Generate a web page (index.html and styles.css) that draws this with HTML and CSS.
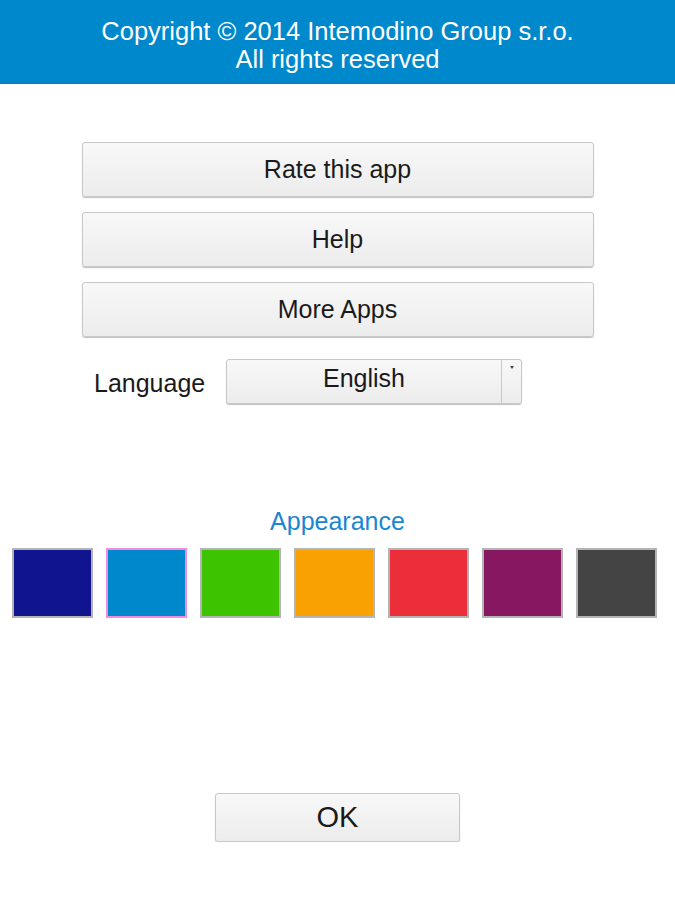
FILE: index.html
```html
<!DOCTYPE html>
<html lang="en">
<head>
  <meta charset="UTF-8">
  <title>Settings</title>
  <link rel="stylesheet" href="styles.css">
</head>
<body>
  <div class="header">
    <div>Copyright &copy; 2014 Intemodino Group s.r.o.</div>
    <div>All rights reserved</div>
  </div>

  <div class="menu">
    <button class="btn">Rate this app</button>
    <button class="btn">Help</button>
    <button class="btn">More Apps</button>
  </div>

  <div class="lang-row">
    <span class="lang-label">Language</span>
    <div class="select">
      <span class="select-value">English</span>
      <span class="select-arrow"></span>
    </div>
  </div>

  <div class="appearance">Appearance</div>
  <div class="swatches">
    <div class="swatch" style="background:#10148f"></div>
    <div class="swatch selected" style="background:#0088cc"></div>
    <div class="swatch" style="background:#3ec300"></div>
    <div class="swatch" style="background:#f9a100"></div>
    <div class="swatch" style="background:#ec2d3a"></div>
    <div class="swatch" style="background:#861760"></div>
    <div class="swatch" style="background:#444444"></div>
  </div>

  <div class="footer">
    <button class="btn ok">OK</button>
  </div>
</body>
</html>
```

FILE: styles.css
```css
html, body {
  margin: 0;
  padding: 0;
  background: #fff;
  font-family: "Liberation Sans", Arial, sans-serif;
  color: #1a1a1a;
}

.header {
  height: 84px;
  box-sizing: border-box;
  padding-top: 17px;
  background: #0088cc;
  border-bottom: 2px solid #0680c2;
  color: #fff;
  text-align: center;
  font-size: 25.5px;
  line-height: 28px;
}

.menu {
  display: flex;
  flex-direction: column;
  gap: 15px;
  width: 512px;
  margin: 58px auto 0;
}

.btn {
  height: 55px;
  border: 1px solid #c8c8c8;
  border-radius: 3px;
  background: linear-gradient(#f8f8f8, #ececec);
  box-shadow: 0 1px 1px rgba(0,0,0,0.25);
  font-family: "Liberation Sans", Arial, sans-serif;
  font-size: 25px;
  color: #1a1a1a;
  padding: 0;
}

.lang-row {
  display: flex;
  align-items: center;
  margin: 22px 0 0 94px;
}

.lang-label {
  font-size: 25px;
  width: 132px;
  margin-top: 4px;
}

.select {
  display: flex;
  width: 296px;
  height: 45px;
  box-sizing: border-box;
  border: 1px solid #c8c8c8;
  border-radius: 3px;
  background: linear-gradient(#f8f8f8, #ececec);
  box-shadow: 0 1px 1px rgba(0,0,0,0.25);
}

.select-value {
  flex: 1;
  text-align: center;
  font-size: 25px;
  line-height: 36px;
}

.select-arrow {
  position: relative;
  width: 19px;
  border-left: 1px solid #c8c8c8;
}

.select-arrow::after {
  content: "";
  position: absolute;
  top: 6px;
  left: 8px;
  border-left: 2px solid transparent;
  border-right: 2px solid transparent;
  border-top: 3px solid #444;
}

.appearance {
  margin-top: 103px;
  text-align: center;
  color: #1a86d0;
  font-size: 25px;
}

.swatches {
  display: flex;
  gap: 13px;
  padding: 12px 0 0 12px;
}

.swatch {
  width: 81px;
  height: 70px;
  box-sizing: border-box;
  border: 2px solid #b4b4b4;
}

.swatch.selected {
  border-color: #f28ce0;
}

.footer {
  display: flex;
  justify-content: center;
  margin-top: 175px;
}

.ok {
  width: 245px;
  height: 49px;
  font-size: 29px;
}
```
